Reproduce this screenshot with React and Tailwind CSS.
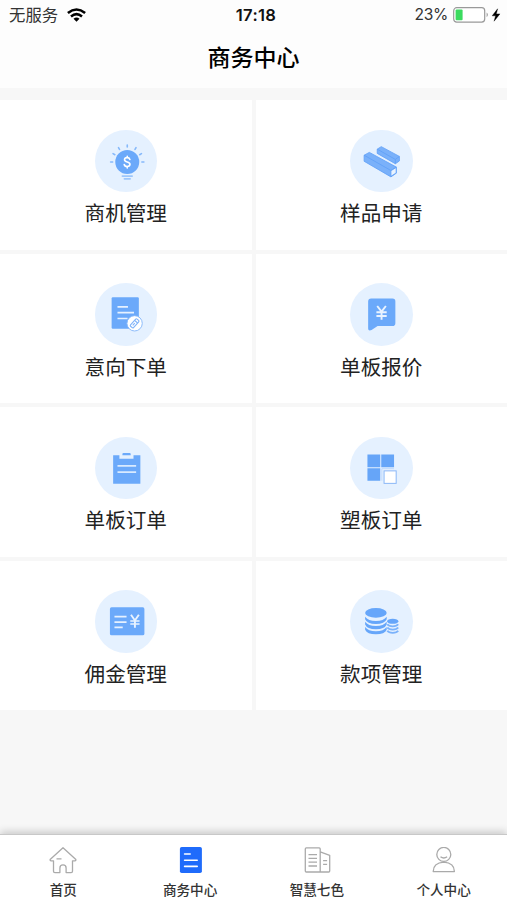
function BulbIcon() {
  return (
    <>
      <g stroke="#86b9fb" strokeWidth="1.6" strokeLinecap="round">
        <path d="M32 15v1.8M23.3 17.5l1 1.8M40.7 17.5l-1 1.8M17.9 23.4l1.8 1.1M46.1 23.4l-1.8 1.1M15.5 31.8h2M46.5 31.8h2" />
      </g>
      <circle cx="32" cy="31.8" r="11.9" fill="#6ba9fa" />
      <path d="M27.2 45.7h9.6M29.2 48.4h5.6" stroke="#9cc6fc" strokeWidth="1.8" strokeLinecap="round" />
      <path
        d="M34.6 29.2c-.4-1.2-1.4-1.8-2.7-1.8-1.5 0-2.6.8-2.6 2.1 0 3 5.4 1.4 5.4 4.5 0 1.4-1.2 2.2-2.8 2.2-1.5 0-2.6-.8-2.9-2M32 26v1.4M32 36.2v1.4"
        fill="none"
        stroke="#fff"
        strokeWidth="1.6"
        strokeLinecap="round"
      />
    </>
  )
}

function SampleIcon() {
  return (
    <g stroke="#5f9ff8" strokeWidth=".8" strokeLinejoin="round">
      <path d="M27 19l4-2.5L49 26.2v4.5L45 33.5 27 23.2z" fill="#7ab1fa" />
      <path d="M27 19l18 10.2 4-3M45 29.2v4.3" fill="none" />
      <path d="M14 25l5.2-2.8L46 36.8v6l-5.4 3.7L14 31z" fill="#7ab1fa" />
      <path d="M14 25l26.6 15.2 5.4-3.4" fill="none" />
      <path d="M40.6 40.4l5.2-3.2v5.4l-5.2 3.4z" fill="#e9f3ff" />
    </g>
  )
}

function IntentIcon() {
  return (
    <>
      <rect x="16.5" y="14.1" width="27" height="31.2" rx="1.2" fill="#6ba9fa" />
      <path d="M22.3 23.6h10.4M22.3 29.4h16.4M22.3 35.2h10" stroke="#e6f1ff" strokeWidth="1.7" />
      <circle cx="39.3" cy="40" r="7.6" fill="#fff" stroke="#83b6fa" strokeWidth=".9" />
      <g transform="rotate(-48 39.3 40)" fill="none" stroke="#7fb3fa" strokeWidth="1.1">
        <rect x="34.5" y="38" width="9.6" height="4" rx="1" />
        <path d="M41.5 38v4M36.5 40h3" />
      </g>
    </>
  )
}

function QuoteIcon() {
  return (
    <>
      <path d="M21 15.3h21.2a2.8 2.8 0 0 1 2.8 2.8v21.8a2.8 2.8 0 0 1-2.8 2.8H27.4l-6 3.9c-2 1-3.4.4-3.4-1.4V18.3a3 3 0 0 1 3-3z" fill="#6ba9fa" />
      <path d="M27 22.8l4.3 5.6 4.3-5.6M31.3 28.4v8M26.2 29h10.2M26.2 32.8h10.2" fill="none" stroke="#e9f3ff" strokeWidth="1.9" />
    </>
  )
}

function BoardIcon() {
  return (
    <>
      <path d="M18 18h6.2v3.6h14V18H45v28.4H18z" fill="#6ba9fa" />
      <path d="M27.2 18v-1.2q0-1 1-1h6.2q1 0 1 1V18z" fill="#6ba9fa" />
      <path d="M22.3 28.6h18.5M22.3 34.8h18.5" stroke="#d9eaff" strokeWidth="1.8" />
    </>
  )
}

function PlasticIcon() {
  return (
    <>
      <path d="M17.3 17.3H30v12.6H17.3zM31 17.3h12.7v12.6H31zM17.3 30.9H30v12.6H17.3z" fill="#66a5f8" />
      <path d="M31.6 43.3V31.4h12" fill="none" stroke="#b6d4fc" strokeWidth=".8" />
      <rect x="33.8" y="33.6" width="12" height="12.4" fill="#fff" stroke="#8bb8f8" strokeWidth="1" />
    </>
  )
}

function CommissionIcon() {
  return (
    <>
      <rect x="14.8" y="17.2" width="34.2" height="27.8" rx="1.6" fill="#6ba9fa" />
      <path d="M19.3 26.5h12M19.3 31.9h12M19.3 37.1h8.2" stroke="#e6f1ff" strokeWidth="1.7" />
      <path d="M35.7 24.6l3.9 5.6 3.9-5.6M39.6 30.2v7.2" fill="none" stroke="#e9f3ff" strokeWidth="1.9" />
      <path d="M35 30.7h9.2M35 33.7h9.2" stroke="#e9f3ff" strokeWidth="1.4" />
    </>
  )
}

function MoneyIcon() {
  return (
    <g fill="#66a6fa">
      <ellipse cx="25.7" cy="22.7" rx="10.7" ry="4.8" />
      <path d="M15 26.5q3 4.2 10.7 4.2t10.7-4.2v2.6q-2 4.7-10.7 4.7T15 29.1z" />
      <path d="M15 31.6q3 4.2 10.7 4.2t10.7-4.2v2.6q-2 4.7-10.7 4.7T15 34.2z" />
      <path d="M15 36.8q3 4.2 10.7 4.2t10.7-4.2v2.6q-2 4.5-10.7 4.5T15 39.4z" />
      <ellipse cx="42.4" cy="31.1" rx="5.6" ry="2.5" />
      <g fill="none" stroke="#7ab2fb" strokeWidth="1.8">
        <path d="M37 34q1.4 2 5.4 2t5.4-2M37 37.3q1.4 2 5.4 2t5.4-2M37 40.5q1.4 2 5.4 2t5.4-2" />
      </g>
    </g>
  )
}

const menus = [
  { label: '商机管理', Icon: BulbIcon },
  { label: '样品申请', Icon: SampleIcon },
  { label: '意向下单', Icon: IntentIcon },
  { label: '单板报价', Icon: QuoteIcon },
  { label: '单板订单', Icon: BoardIcon },
  { label: '塑板订单', Icon: PlasticIcon },
  { label: '佣金管理', Icon: CommissionIcon },
  { label: '款项管理', Icon: MoneyIcon },
]

function HomeTab() {
  return (
    <path d="M14 .8L1.4 12.2q-.8 1.2.6 1.6h2.5v10.4q0 1.4 1.4 1.4h5V21a3.1 3.1 0 0 1 6.2 0v4.6h5q1.4 0 1.4-1.4V13.8H26q1.4-.4.6-1.6zM7.5 11.8h5" />
  )
}

function BusinessTab() {
  return (
    <>
      <rect x="3.9" y="0" width="22" height="26" rx="1.8" fill="#1f6bfb" stroke="none" />
      <path d="M8.6 7h5.6M8.6 13.3h12.6M8.6 19.4h12.6" stroke="#fff" strokeWidth="1.6" strokeLinecap="round" />
    </>
  )
}

function BuildingTab() {
  return (
    <>
      <path d="M17.2 25V1.9q0-1-1-1H3.3q-1 0-1 1V24q0 1 1 1h22.4q1 0 1-1V8.3l-9.5-3.4" />
      <path d="M5.5 7.6H14M5.5 11.4H14M5.5 15.2H14M5.5 19H14M20.1 13.6h4M20.1 17.4h4" />
    </>
  )
}

function UserTab() {
  return (
    <>
      <circle cx="13.8" cy="7.4" r="7" />
      <path d="M10.5 9.7q3.3 2.6 6.6 0M3.2 24.6q0-8.6 10.6-9.4 10.6.8 10.6 9.4z" />
    </>
  )
}

const tabs = [
  { label: '首页', Icon: HomeTab },
  { label: '商务中心', Icon: BusinessTab },
  { label: '智慧七色', Icon: BuildingTab },
  { label: '个人中心', Icon: UserTab },
]

function StatusBar() {
  return (
    <div className="grid h-[30px] grid-cols-3 items-center pr-[6px] pl-[9px] font-['Inter','Noto_Sans_CJK_SC',sans-serif] text-[16px] leading-none text-[#333]">
      <div className="flex items-center gap-[9px]">
        <span className="text-[16.4px]">无服务</span>
        <svg width="19" height="14" viewBox="0 0 19 14" fill="none" stroke="#000" strokeWidth="2.6">
          <path d="M.9 4.9Q9.5-1.9 18.1 4.9M4 8.4q5.5-4.4 11 0" />
          <path d="M6.5 10.8q3-2.4 6 0l-3 3z" fill="#000" stroke="none" />
        </svg>
      </div>
      <span className="pr-px pl-[3px] text-center text-[16.6px] font-semibold tracking-[0.3px] text-[#111]">17:18</span>
      <div className="flex items-center justify-end">
        <span className="mr-[5px] text-[15.6px] tracking-[-0.3px]">23%</span>
        <svg width="48" height="16" viewBox="0 0 48 16">
          <rect x=".7" y=".7" width="31" height="14.4" rx="3" fill="#fff" stroke="#999" strokeWidth="1.2" />
          <rect x="2.6" y="2.6" width="7" height="10.6" rx="1" fill="#3bdb5f" />
          <path d="M33.6 5.6q2.6 2.2 0 4.6z" fill="#999" />
          <path d="M44.6 1.8L39.2 8.8h3.4l-1.5 5.4 5.8-7.3h-3.6z" fill="#000" stroke="#000" strokeWidth=".4" />
        </svg>
      </div>
    </div>
  )
}

export default function App() {
  return (
    <div className="flex h-[900px] w-full flex-col overflow-hidden bg-[#f7f7f7] font-['Noto_Sans_CJK_SC',sans-serif]">
      <header className="h-[88px] shrink-0 bg-[#fdfdfd]">
        <StatusBar />
        <h1 className="text-center text-[23px] leading-[53px] font-medium text-black">商务中心</h1>
      </header>

      <main className="mt-3 grid h-[610px] shrink-0 grid-cols-2 grid-rows-4 gap-1">
        {menus.map(({ label, Icon }) => (
          <div key={label} className="flex flex-col items-center bg-white pt-[29.5px]">
            <div className="size-[62.5px] shrink-0 rounded-full bg-[#e5f1ff]">
              <svg className="size-full" viewBox="0 0 62 62">
                <Icon />
              </svg>
            </div>
            <span className="mt-[5px] text-[20.6px] leading-[30px] text-[#222]">{label}</span>
          </div>
        ))}
      </main>

      <nav className="mt-auto grid h-[66px] shrink-0 grid-cols-4 border-t border-[#c8c8c8] bg-white shadow-[0_-2px_8px_rgba(0,0,0,0.2)]">
        {tabs.map(({ label, Icon }) => (
          <div key={label} className="flex flex-col items-center pt-[12px]">
            <svg width="28" height="27" viewBox="0 0 28 27" fill="none" stroke="#aaa" strokeWidth="1.3" strokeLinejoin="round">
              <Icon />
            </svg>
            <span className="mt-[5px] text-[13.6px] leading-[20px] font-medium text-[#333]">{label}</span>
          </div>
        ))}
      </nav>
    </div>
  )
}
